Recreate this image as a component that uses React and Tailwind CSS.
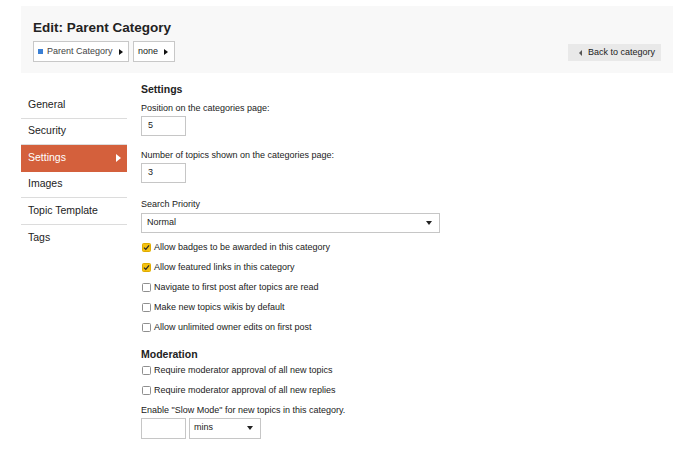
import React from "react";

const navItems = ["General", "Security", "Settings", "Images", "Topic Template", "Tags"];

const settingsChecks = [
  { label: "Allow badges to be awarded in this category", checked: true },
  { label: "Allow featured links in this category", checked: true },
  { label: "Navigate to first post after topics are read", checked: false },
  { label: "Make new topics wikis by default", checked: false },
  { label: "Allow unlimited owner edits on first post", checked: false },
];

const moderationChecks = [
  { label: "Require moderator approval of all new topics", checked: false },
  { label: "Require moderator approval of all new replies", checked: false },
];

const CaretRight = () => (
  <span className="w-0 h-0 border-y-[3px] border-y-transparent border-l-[4px] border-l-[#111]" />
);

const CaretDown = () => (
  <span className="w-0 h-0 border-x-[3.5px] border-x-transparent border-t-[4px] border-t-[#222]" />
);

const Checkbox = ({ checked }) =>
  checked ? (
    <span className="w-[9px] h-[9px] rounded-[1.5px] bg-[#f5c211] border border-[#e0ac00] flex items-center justify-center">
      <svg width="7" height="7" viewBox="0 0 6 6">
        <path d="M0.8 3.1 L2.4 4.6 L5.2 1.2" fill="none" stroke="#2b2b2b" strokeWidth="1.1" />
      </svg>
    </span>
  ) : (
    <span className="w-[9px] h-[9px] rounded-[1.5px] bg-white border border-[#8f8f8f]" />
  );

const CheckRow = ({ label, checked, className = "" }) => (
  <div className={`flex items-center h-[11px] pl-[1px] ${className}`}>
    <Checkbox checked={checked} />
    <span className="ml-[3px] text-[9px] leading-[11px]">{label}</span>
  </div>
);

const Label = ({ children, className = "" }) => (
  <div className={`text-[9px] leading-[11px] ${className}`}>{children}</div>
);

const TextInput = ({ value, className = "" }) => (
  <div className={`w-[45px] h-[20px] border border-[#c6c6c6] bg-white flex items-center pl-[6px] text-[9px] ${className}`}>
    {value}
  </div>
);

export default function App() {
  return (
    <div className="w-[690px] h-[450px] overflow-hidden bg-white text-[#222] font-['Liberation_Sans',Arial,sans-serif] pl-[21px] pt-[6px]">
      {/* header */}
      <div className="w-[652px] h-[67px] bg-[#f8f8f8] pl-[12px] pr-[12px] pt-[14px]">
        <h1 className="text-[13.5px] leading-[16px] font-bold">Edit: Parent Category</h1>
        <div className="mt-[5px] flex items-end justify-between">
          <div className="flex gap-[4px]">
            <div className="w-[96px] h-[21px] bg-white border border-[#c8c8c8] flex items-center pl-[4px]">
              <span className="w-[5px] h-[5px] bg-[#3a7fd4]" />
              <span className="ml-[4px] text-[9px] text-[#444]">Parent Category</span>
              <span className="ml-[6px] flex"><CaretRight /></span>
            </div>
            <div className="w-[42px] h-[21px] bg-white border border-[#c8c8c8] flex items-center pl-[4px]">
              <span className="text-[9px]">none</span>
              <span className="ml-[6px] flex"><CaretRight /></span>
            </div>
          </div>
          <button className="mb-[1px] w-[93px] h-[17px] bg-[#e9e9e9] flex items-center pl-[11px] text-[9px] text-[#222]">
            <span className="w-0 h-0 border-y-[3px] border-y-transparent border-r-[3px] border-r-[#555]" />
            <span className="ml-[6px]">Back to category</span>
          </button>
        </div>
      </div>

      <div className="flex">
        {/* sidebar */}
        <div className="w-[106px] mt-[19px] shrink-0">
          {navItems.map((item, i) => {
            const active = item === "Settings";
            const last = i === navItems.length - 1;
            return (
              <div
                key={item}
                className={`h-[26.5px] flex items-center justify-between pl-[7px] pr-[6px] text-[10.5px] ${
                  active ? "bg-[#d4603c] text-white" : last ? "" : "border-b border-[#dcdcdc]"
                }`}
              >
                <span>{item}</span>
                {active && (
                  <span className="w-0 h-0 border-y-[4px] border-y-transparent border-l-[5px] border-l-white" />
                )}
              </div>
            );
          })}
        </div>

        {/* content */}
        <div className="ml-[14px] flex-1 mt-[10px]">
          <h2 className="text-[10.5px] leading-[13px] font-bold">Settings</h2>
          <Label className="mt-[6.5px]">Position on the categories page:</Label>
          <TextInput value="5" className="mt-[2px]" />

          <Label className="mt-[14.5px]">Number of topics shown on the categories page:</Label>
          <TextInput value="3" className="mt-[2px]" />

          <Label className="mt-[15.5px]">Search Priority</Label>
          <div className="mt-[3px] w-[299px] h-[20px] border border-[#c6c6c6] bg-white flex items-center justify-between pl-[5px] pr-[7px] text-[9px]">
            <span>Normal</span>
            <CaretDown />
          </div>

          <div className="mt-[9px] flex flex-col gap-[9px]">
            {settingsChecks.map((c) => (
              <CheckRow key={c.label} {...c} />
            ))}
          </div>

          <h2 className="mt-[15.5px] text-[10.5px] leading-[13px] font-bold">Moderation</h2>
          <div className="mt-[4px] flex flex-col gap-[9px]">
            {moderationChecks.map((c) => (
              <CheckRow key={c.label} {...c} />
            ))}
          </div>
          <Label className="mt-[9px]">Enable "Slow Mode" for new topics in this category.</Label>
          <div className="mt-[1.5px] flex gap-[3px]">
            <div className="w-[45px] h-[21px] border border-[#c6c6c6] bg-white" />
            <div className="w-[72px] h-[21px] border border-[#c6c6c6] bg-white flex items-center justify-between pl-[4px] pr-[7px] text-[9px]">
              <span>mins</span>
              <CaretDown />
            </div>
          </div>
        </div>
      </div>
    </div>
  );
}
